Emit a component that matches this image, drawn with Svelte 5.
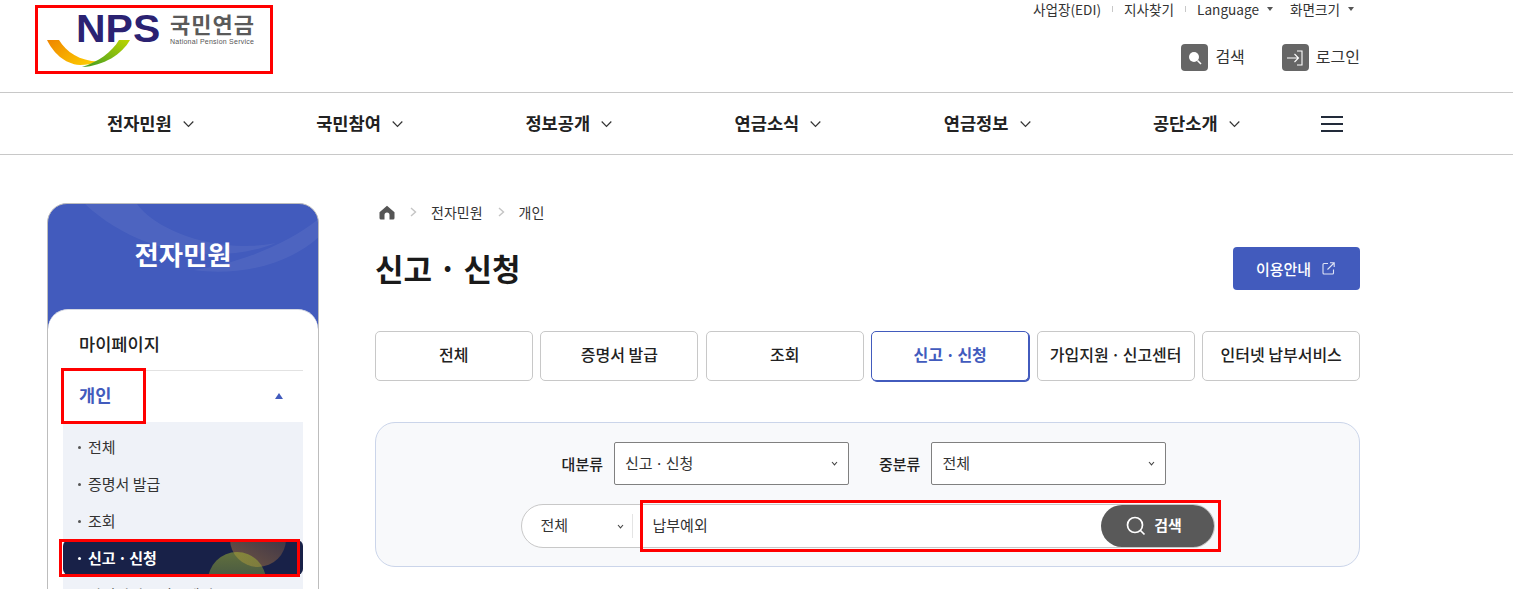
<script>
  const util = [
    { label: '사업장(EDI)', sep: true },
    { label: '지사찾기', sep: true },
    { label: 'Language', caret: true },
    { label: '화면크기', caret: true }
  ];
  const nav = ['전자민원', '국민참여', '정보공개', '연금소식', '연금정보', '공단소개'];
  const tabs = ['전체', '증명서 발급', '조회', '신고 · 신청', '가입지원 · 신고센터', '인터넷 납부서비스'];
  const subItems = ['전체', '증명서 발급', '조회', '신고 · 신청', '가입지원 · 신고센터'];
</script>

<div class="page">
  <header class="header">
    <a class="logo" href="#top">
      <svg class="swoosh" width="90" height="30" viewBox="47 38 90 30">
        <defs>
          <linearGradient id="orange" x1="0" y1="0" x2="1" y2="0.6">
            <stop offset="0" stop-color="#ef8500" />
            <stop offset="1" stop-color="#fcc800" />
          </linearGradient>
          <linearGradient id="green" x1="0" y1="1" x2="1" y2="0">
            <stop offset="0" stop-color="#3f9c25" />
            <stop offset="1" stop-color="#bcd500" />
          </linearGradient>
        </defs>
        <path fill="url(#orange)" d="M47 40H59C66 52 80 61 98 61.5C92 64 86 65 80 65C64 64 53 52 47 40Z" />
        <path fill="url(#green)" d="M119 40H130C122 54 104 66 82 67C98 62 112 52 119 40Z" />
      </svg>
      <span class="logo-mark">NPS</span>
      <span class="logo-name">
        <span class="logo-ko">국민연금</span>
        <span class="logo-en">National Pension Service</span>
      </span>
    </a>

    <div class="header-right">
      <ul class="util">
        {#each util as item}
          <li class:sep={item.sep}>
            {item.label}
            {#if item.caret}<i class="caret"></i>{/if}
          </li>
        {/each}
      </ul>
      <div class="actions">
        <span class="action">
          <span class="action-icon">
            <svg width="16" height="16" viewBox="0 0 16 16">
              <circle cx="7" cy="7" r="5" fill="#fff" />
              <path d="M10.5 10.5 14 14" stroke="#fff" stroke-width="1.6" fill="none" />
            </svg>
          </span>
          <span class="action-text">검색</span>
        </span>
        <span class="action">
          <span class="action-icon">
            <svg width="18" height="16" viewBox="0 0 18 16" fill="none" stroke="#fff" stroke-width="1.1">
              <path d="M1 8H12M8.5 4 12.5 8 8.5 12" />
              <path d="M11 1H16V15H11" />
            </svg>
          </span>
          <span class="action-text">로그인</span>
        </span>
      </div>
    </div>
  </header>

  <nav class="gnb">
    {#each nav as item}
      <span class="gnb-item">
        {item}
        <svg width="11" height="8" viewBox="0 0 11 8" fill="none" stroke="#333" stroke-width="1.2">
          <path d="M.7 1.5 5.500 6.300 10.300 1.500" />
        </svg>
      </span>
    {/each}
    <span class="burger"><i></i><i></i><i></i></span>
  </nav>

  <div class="body">
    <aside class="side">
      <div class="side-head">
        <svg class="side-deco" width="270" height="100" viewBox="0 0 270 100">
          <path fill="#fff" fill-opacity="0.06" d="M37 0H89C110 28 170 50 228 39C170 62 90 50 37 0Z" />
          <path fill="#fff" fill-opacity="0.06" d="M145 66C190 60 240 40 272 14V32C240 62 190 72 145 66Z" />
        </svg>
        <h2>전자민원</h2>
      </div>
      <div class="side-card">
        <div class="side-link">마이페이지</div>
        <div class="side-link open">
          개인
          <i class="up"></i>
        </div>
        <ul class="sub">
          {#each subItems as item}
            <li class:active={item === '신고 · 신청'}>
              {#if item === '신고 · 신청'}
                <span class="glow one"></span>
                <span class="glow two"></span>
              {/if}
              <span class="sub-text">{item}</span>
            </li>
          {/each}
        </ul>
      </div>
    </aside>

    <main class="main">
      <div class="crumbs">
        <svg width="16" height="15" viewBox="0 0 16 15">
          <path fill="#555" d="M8 .8 15.5 7.2V13a1.5 1.5 0 0 1-1.5 1.5H10.5V10a2.5 2.5 0 0 0-5 0v4.5H2A1.5 1.5 0 0 1 .5 13V7.2Z" />
        </svg>
        <svg class="crumb-arrow" width="7" height="10" viewBox="0 0 7 10" fill="none" stroke="#c4c4c4" stroke-width="1.4">
          <path d="M1 1 5.5 5 1 9" />
        </svg>
        <span>전자민원</span>
        <svg class="crumb-arrow" width="7" height="10" viewBox="0 0 7 10" fill="none" stroke="#c4c4c4" stroke-width="1.4">
          <path d="M1 1 5.5 5 1 9" />
        </svg>
        <span>개인</span>
      </div>

      <div class="title-row">
        <h1>신고 · 신청</h1>
        <button class="guide">
          이용안내
          <svg width="13" height="13" viewBox="0 0 13 13" fill="none" stroke="#dfe4f5" stroke-width="1.1">
            <path d="M6 1.5H2A1 1 0 0 0 1 2.500V11A1 1 0 0 0 2 12H10.500A1 1 0 0 0 11.500 11V7.500" />
            <path d="M5.500 7.500 12 1M8 .8H12.200V5" />
          </svg>
        </button>
      </div>

      <div class="tabs">
        {#each tabs as tab}
          <button class="tab" class:dot={tab.includes('·')} class:on={tab === '신고 · 신청'}>{tab}</button>
        {/each}
      </div>

      <section class="search-box">
        <div class="filter-row">
          <span class="filter-label">대분류</span>
          <div class="select">
            신고 · 신청
            <svg class="chev" width="7" height="5" viewBox="0 0 7 5" fill="none" stroke="#444" stroke-width="1.1"><path d="M1 1 3.500 3.800 6 1" /></svg>
          </div>
          <span class="filter-label second">중분류</span>
          <div class="select">
            전체
            <svg class="chev" width="7" height="5" viewBox="0 0 7 5" fill="none" stroke="#444" stroke-width="1.1"><path d="M1 1 3.500 3.800 6 1" /></svg>
          </div>
        </div>
        <div class="search-row">
          <div class="scope">
            <span class="lift">전체</span>
            <svg class="chev" width="7" height="5" viewBox="0 0 7 5" fill="none" stroke="#444" stroke-width="1.1"><path d="M1 1 3.500 3.800 6 1" /></svg>
          </div>
          <div class="keyword"><span class="lift">납부예외</span></div>
          <button class="search-btn">
            <svg width="20" height="20" viewBox="0 0 20 20" fill="none" stroke="#fff" stroke-width="1.7">
              <circle cx="9" cy="9" r="7.500" />
              <path d="M14.500 14.500 18.500 18.500" />
            </svg>
            <span class="lift">검색</span>
          </button>
        </div>
      </section>
    </main>
  </div>

  <!-- red review marks drawn over the capture -->
  <span class="mark m-logo"></span>
  <span class="mark m-side"></span>
  <span class="mark m-active"></span>
  <span class="mark m-search"></span>
</div>

<style>
  :global(body) {
    margin: 0;
    background: #fff;
  }

  .page {
    position: relative;
    width: 1513px;
    height: 589px;
    overflow: hidden;
    font-family: "Noto Sans CJK KR", "Noto Sans", sans-serif;
    color: #222;
  }

  ul {
    list-style: none;
    margin: 0;
    padding: 0;
  }

  button {
    font-family: inherit;
    cursor: pointer;
  }

  .lift {
    display: block;
    margin-top: -4px;
  }

  .header {
    display: flex;
    justify-content: space-between;
    height: 92px;
    padding: 0 153px 0 38px;
    border-bottom: 1px solid #c8c8c8;
  }

  .logo {
    position: relative;
    display: flex;
    align-items: flex-start;
    width: 235px;
    height: 66px;
    margin-top: 7px;
    color: inherit;
    text-decoration: none;
  }

  .swoosh {
    position: absolute;
    left: 9px;
    top: 31px;
  }

  .logo-mark {
    width: 84px;
    margin-left: 38px;
    font: bold 39px/44px "Liberation Sans", sans-serif;
    color: #2b2272;
    transform: scaleX(1.05);
    transform-origin: left;
  }

  .logo-name {
    display: flex;
    flex-direction: column;
    margin: 4px 0 0 10px;
  }

  .logo-ko {
    font-size: 22px;
    line-height: 24px;
    letter-spacing: 1px;
    font-weight: 700;
    color: #5a5a5a;
  }

  .logo-en {
    margin-top: 2px;
    font: 7px/10px "Liberation Sans", sans-serif;
    letter-spacing: 0.25px;
    color: #555;
    white-space: nowrap;
  }

  .header-right {
    display: flex;
    flex-direction: column;
    align-items: flex-end;
  }

  .util {
    display: flex;
    align-items: center;
    height: 18px;
    font-size: 13.600px;
    line-height: 18px;
    color: #333;
  }

  .util li {
    display: flex;
    align-items: center;
    margin-left: 11px;
  }

  .util li:first-child {
    margin-left: 0;
  }

  .util li.sep {
    margin-left: 0;
    margin-right: 0;
  }

  .util li.sep::after {
    content: "";
    width: 1px;
    height: 6px;
    margin: 0 11px;
    background: #c8c8c8;
  }

  .util li.sep + li:not(.sep) {
    margin-left: 0;
  }

  .caret {
    width: 0;
    height: 0;
    margin: 0 6px 0 8px;
    border-left: 3.5px solid transparent;
    border-right: 3.5px solid transparent;
    border-top: 4px solid #555;
  }

  .actions {
    display: flex;
    gap: 37px;
    margin-top: 26px;
  }

  .action {
    display: flex;
    align-items: center;
    gap: 7px;
    font-size: 16px;
    line-height: 27px;
    color: #333;
  }

  .action-text {
    margin-top: -2px;
  }

  .action-icon {
    display: flex;
    align-items: center;
    justify-content: center;
    width: 27px;
    height: 27px;
    border-radius: 4px;
    background: #666;
  }

  .gnb {
    display: flex;
    align-items: center;
    height: 61px;
    padding-left: 107px;
    border-bottom: 1px solid #c8c8c8;
  }

  .gnb-item {
    display: flex;
    align-items: center;
    gap: 11px;
    width: 209.200px;
    padding-bottom: 3px;
    font-size: 17.600px;
    font-weight: 700;
    color: #222;
  }

  .gnb-item svg {
    margin-top: 3px;
  }

  .burger {
    display: flex;
    flex-direction: column;
    gap: 5px;
    width: 22px;
    margin-left: -41px;
  }

  .burger i {
    height: 2px;
    background: #222b3a;
  }

  .body {
    display: flex;
    gap: 56px;
    padding: 48px 153px 0 47px;
  }

  .side {
    flex: none;
    width: 272px;
    height: 420px;
    box-sizing: border-box;
    border: 1px solid #bdbdbd;
    border-radius: 20px 20px 0 0;
    background: #425bbd;
    overflow: hidden;
  }

  .side-head {
    position: relative;
    height: 105px;
    color: #fff;
  }

  .side-deco {
    position: absolute;
    left: 0;
    top: 0;
  }

  .side-head h2 {
    position: relative;
    margin: 0;
    padding-top: 30px;
    font-size: 26.400px;
    line-height: 40px;
    font-weight: 700;
    text-align: center;
  }

  .side-card {
    height: 320px;
    padding: 15px 15px 0;
    border-top: 1px solid #d5d8e2;
    border-radius: 20px 20px 0 0;
    background: #fff;
  }

  .side-link {
    display: flex;
    align-items: center;
    justify-content: space-between;
    height: 45px;
    padding: 0 20px 0 16px;
    font-size: 17.600px;
    font-weight: 500;
    color: #222;
    border-bottom: 1px solid #e2e2e2;
  }

  .side-link:first-child {
    height: 37px;
    padding-bottom: 8px;
  }

  .side-link.open {
    height: 46px;
    padding-bottom: 5px;
    border-bottom: 0;
    font-weight: 700;
    color: #425bbd;
  }

  .up {
    width: 0;
    height: 0;
    margin-top: 4px;
    border-left: 4px solid transparent;
    border-right: 4px solid transparent;
    border-bottom: 6px solid #425bbd;
  }

  .sub {
    padding: 7px 0;
    background: #eff2f8;
  }

  .sub li {
    position: relative;
    height: 35px;
    margin-bottom: 2px;
    padding-left: 25px;
    font-size: 15px;
    line-height: 35px;
    color: #333;
    overflow: hidden;
  }

  .sub li::before {
    content: "";
    position: absolute;
    left: 15px;
    top: 17px;
    width: 3px;
    height: 3px;
    border-radius: 50%;
    background: #555;
  }

  .sub li.active {
    border-radius: 6px;
    background: #182148;
    color: #fff;
    font-weight: 700;
    word-spacing: -1px;
  }

  .sub li.active::before {
    background: #fff;
  }

  .sub-text {
    position: relative;
  }

  .glow {
    position: absolute;
    border-radius: 50%;
  }

  .glow.one {
    left: 167px;
    top: -29px;
    width: 56px;
    height: 56px;
    background: linear-gradient(210deg, rgba(170, 90, 90, 0.1), rgba(220, 150, 60, 0.45));
  }

  .glow.two {
    left: 145px;
    top: 12px;
    width: 58px;
    height: 58px;
    background: linear-gradient(180deg, rgba(170, 190, 50, 0.5), rgba(110, 170, 80, 0.2));
  }

  .main {
    flex: 1;
    min-width: 0;
  }

  .crumbs {
    display: flex;
    align-items: center;
    height: 20px;
    margin-top: -1px;
    padding-left: 4px;
    font-size: 14px;
    color: #333;
  }

  .crumb-arrow {
    margin: 0 14px 0 15px;
  }

  .title-row {
    display: flex;
    align-items: flex-start;
    justify-content: space-between;
    margin-top: 25px;
  }

  h1 {
    margin: -1px 0 0;
    font-size: 31px;
    line-height: 44px;
    word-spacing: -0.500px;
    font-weight: 700;
    color: #1a1a1a;
  }

  .guide {
    display: flex;
    align-items: center;
    justify-content: center;
    gap: 11px;
    width: 127px;
    height: 43px;
    padding: 0 2px 0 0;
    border: 0;
    border-radius: 4px;
    background: #425bbd;
    color: #fff;
    font-size: 15px;
    font-weight: 500;
  }

  .tabs {
    display: grid;
    grid-template-columns: repeat(6, 1fr);
    gap: 7.800px;
    margin-top: 41px;
  }

  .tab {
    height: 50px;
    padding: 0 0 4px;
    border: 1px solid #c8c8c8;
    border-radius: 5px;
    background: #fff;
    font-size: 16px;
    font-weight: 500;
    color: #222;
  }

  .tab.dot {
    word-spacing: -1.200px;
  }

  .tab.on {
    border-color: #425bbd;
    box-shadow: 1px 1px 0 #425bbd;
    color: #425bbd;
    font-weight: 700;
  }

  .search-box {
    display: flex;
    flex-direction: column;
    align-items: center;
    gap: 19px;
    height: 145px;
    box-sizing: border-box;
    margin-top: 41px;
    padding-top: 19px;
    border: 1px solid #cbd5ea;
    border-radius: 20px;
    background: #f8f9fb;
  }

  .filter-row {
    display: flex;
    align-items: center;
    gap: 11px;
    padding-right: 7px;
  }

  .filter-label {
    padding-bottom: 1px;
    font-size: 15px;
    font-weight: 500;
    color: #222;
  }

  .filter-label.second {
    margin-left: 19px;
  }

  .select {
    display: flex;
    align-items: center;
    justify-content: space-between;
    width: 235px;
    height: 43px;
    box-sizing: border-box;
    padding: 0 10px 2px 10px;
    border: 1px solid #808080;
    border-radius: 2px;
    background: #fff;
    font-size: 15px;
    word-spacing: -1px;
    color: #333;
  }

  .select .chev {
    margin-top: 2px;
  }

  .search-row {
    display: flex;
    align-items: center;
    width: 694px;
    height: 44px;
    box-sizing: border-box;
    border: 1px solid #c8c8c8;
    border-radius: 22px;
    background: #fff;
    font-size: 15px;
    color: #333;
  }

  .scope {
    display: flex;
    align-items: center;
    justify-content: space-between;
    width: 111px;
    height: 24px;
    box-sizing: border-box;
    padding: 0 8px 0 19px;
    border-right: 1px solid #e4e4e4;
  }

  .keyword {
    flex: 1;
    padding-left: 20px;
  }

  .search-btn {
    display: flex;
    align-items: center;
    justify-content: center;
    gap: 8px;
    width: 113px;
    height: 42px;
    padding: 0 6px 0 0;
    border: 0;
    border-radius: 21px;
    background: #595959;
    color: #fff;
    font-size: 15px;
    font-weight: 700;
  }

  .mark {
    position: absolute;
    box-sizing: border-box;
    border: 3px solid #f00;
  }

  .m-logo {
    left: 35px;
    top: 5px;
    width: 238px;
    height: 69px;
  }

  .m-side {
    left: 61px;
    top: 368px;
    width: 85px;
    height: 56px;
  }

  .m-active {
    left: 59px;
    top: 539px;
    width: 241px;
    height: 38px;
  }

  .m-search {
    left: 640px;
    top: 500px;
    width: 581px;
    height: 52px;
  }
</style>
